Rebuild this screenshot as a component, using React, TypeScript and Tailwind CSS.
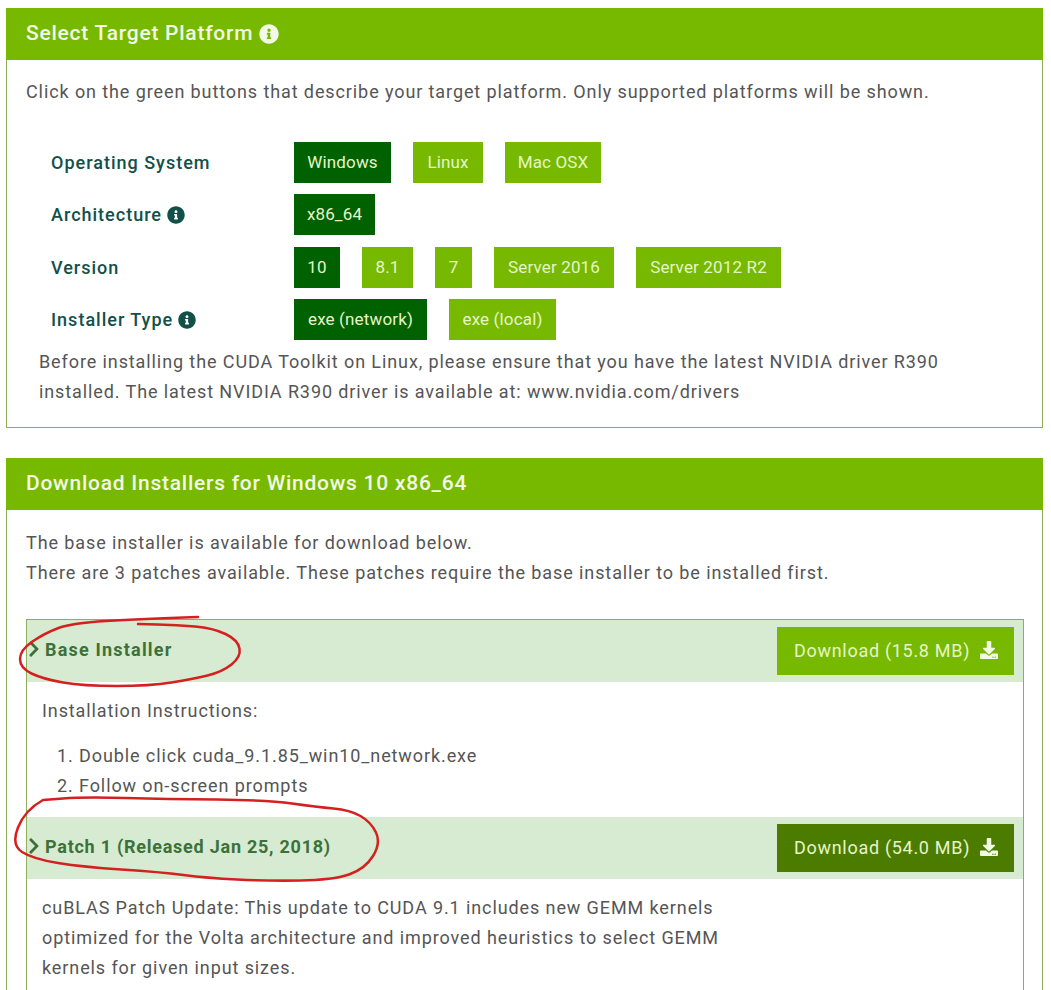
import React from "react";
import { FaChevronRight, FaDownload, FaInfoCircle } from "react-icons/fa";

type Opt = { label: string; width: string; active?: boolean };

const rows: { label: string; info?: boolean; gap: string; options: Opt[] }[] = [
  {
    label: "Operating System",
    gap: "h-[41px] mb-[11px]",
    options: [
      { label: "Windows", width: "w-[97px]", active: true },
      { label: "Linux", width: "w-[70px]" },
      { label: "Mac OSX", width: "w-[96px]" },
    ],
  },
  {
    label: "Architecture",
    info: true,
    gap: "h-[41px] mb-[12px]",
    options: [{ label: "x86_64", width: "w-[81px]", active: true }],
  },
  {
    label: "Version",
    gap: "h-[41px] mb-[11px]",
    options: [
      { label: "10", width: "w-[46px]", active: true },
      { label: "8.1", width: "w-[51px]" },
      { label: "7", width: "w-[37px]" },
      { label: "Server 2016", width: "w-[120px]" },
      { label: "Server 2012 R2", width: "w-[145px]" },
    ],
  },
  {
    label: "Installer Type",
    info: true,
    gap: "h-[41px]",
    options: [
      { label: "exe (network)", width: "w-[133px]", active: true },
      { label: "exe (local)", width: "w-[107px]" },
    ],
  },
];

// midpoints smoothing for the hand drawn red circles
const smooth = (pts: number[][]) => {
  let d = `M${pts[0][0]} ${pts[0][1]}`;
  for (let i = 1; i < pts.length - 1; i++) {
    const mx = (pts[i][0] + pts[i + 1][0]) / 2;
    const my = (pts[i][1] + pts[i + 1][1]) / 2;
    d += ` Q${pts[i][0]} ${pts[i][1]} ${mx} ${my}`;
  }
  const last = pts[pts.length - 1];
  return d + ` L${last[0]} ${last[1]}`;
};

const circleOne = [
  [198, 617], [140, 619], [72, 623], [45, 633], [20, 650], [20, 668], [43, 679], [83, 686],
  [150, 686], [193, 679], [222, 672], [241, 657], [238, 640], [213, 628], [177, 625], [138, 624],
];

const circleTwo = [
  [43, 800], [25, 810], [11, 845], [33, 859], [83, 867], [160, 872], [207, 878], [267, 881],
  [333, 880], [365, 869], [381, 843], [371, 822], [350, 810], [317, 807], [267, 800], [167, 799],
  [83, 797], [43, 800],
];

const AccordionHeader = ({
  title,
  download,
  tracking,
  dark,
}: {
  title: string;
  download: string;
  tracking: string;
  dark?: boolean;
}) => (
  <div className="flex h-[62px] items-center justify-between bg-[#d6ebd1] pr-[9px]">
    <div className={"flex items-center pb-[4px] text-[18px] font-bold text-[#3c7139] " + tracking}>
      <FaChevronRight className="mr-[5px] ml-[1px] h-[18px] w-[12px]" />
      {title}
    </div>
    <div
      className={
        dark
          ? "flex h-[48px] w-[237px] items-center pl-[17px] text-[18px] tracking-[0.7px] text-[#e6f5c8] bg-[#4b7c00]"
          : "flex h-[48px] w-[237px] items-center pl-[17px] text-[18px] tracking-[0.7px] text-[#e6f5c8] bg-[#76b900]"
      }
    >
      <span className="pb-[2px]">{download}</span>
      <FaDownload className="mb-[3px] ml-[10px] h-[18px] w-[18px] text-[#f2f9e6]" />
    </div>
  </div>
);

export default function App() {
  return (
    <div className="relative h-[990px] overflow-hidden bg-white pt-2 pr-2 pl-[6px] font-['Roboto',sans-serif] text-[18px] text-[#555555]">
      <section className="h-[420px] border border-t-0 border-[#8fae5b]">
        <h2 className="-mx-px flex h-[52px] items-center gap-[6px] bg-[#76b900] pl-[20px] text-[21px] font-medium tracking-[0.75px] text-[#f2f9e6]">
          Select Target Platform
          <FaInfoCircle className="h-[20px] w-[20px]" />
        </h2>
        <p className="mt-[20px] pl-[19px] leading-[24px] tracking-[0.9px]">
          Click on the green buttons that describe your target platform. Only supported platforms will be shown.
        </p>
        <div className="mt-[38px] pl-[44px]">
          {rows.map((row) => (
            <div key={row.label} className={`flex items-center ${row.gap}`}>
              <div className="flex w-[243px] items-center gap-[5px] text-[18px] font-medium tracking-[1px] text-[#12504a]">
                {row.label}
                {row.info && <FaInfoCircle className="h-[18px] w-[18px]" />}
              </div>
              <div className="flex gap-[22px]">
                {row.options.map((opt) => (
                  <div
                    key={opt.label}
                    className={
                      opt.active
                        ? "flex h-[41px] items-center justify-center bg-[#006100] text-[17px] tracking-[0.15px] text-[#e6f5c8] " + opt.width
                        : "flex h-[41px] items-center justify-center bg-[#76b900] text-[17px] tracking-[0.15px] text-[#e6f5c8] " + opt.width
                    }
                  >
                    {opt.label}
                  </div>
                ))}
              </div>
            </div>
          ))}
        </div>
        <p className="mt-[7px] pl-[32px] leading-[30px] tracking-[0.9px]">
          Before installing the CUDA Toolkit on Linux, please ensure that you have the latest NVIDIA driver R390
          <br />
          installed. The latest NVIDIA R390 driver is available at: www.nvidia.com/drivers
        </p>
      </section>

      <section className="mt-[30px] h-[600px] border border-t-0 border-[#8fae5b]">
        <h2 className="-mx-px flex h-[52px] items-center bg-[#76b900] pl-[20px] text-[21px] font-medium tracking-[0.75px] text-[#f2f9e6]">
          Download Installers for Windows 10 x86_64
        </h2>
        <p className="mt-[18px] pl-[19px] leading-[30px] tracking-[0.9px]">
          The base installer is available for download below.
          <br />
          There are 3 patches available. These patches require the base installer to be installed first.
        </p>
        <div className="mt-[31px] ml-[19px] h-[400px] w-[998px] border border-b-0 border-[#8fae5b]">
          <AccordionHeader title="Base Installer" download="Download (15.8 MB)" tracking="tracking-[1.2px]" />
          <p className="mt-[14px] pl-[15px] leading-[30px] tracking-[0.9px]">Installation Instructions:</p>
          <ol className="mt-[15px] pl-[30px] leading-[30px] tracking-[0.9px]">
            <li>1. Double click cuda_9.1.85_win10_network.exe</li>
            <li>2. Follow on-screen prompts</li>
          </ol>
          <div className="mt-[16px]">
            <AccordionHeader
              title="Patch 1 (Released Jan 25, 2018)"
              download="Download (54.0 MB)"
              tracking="tracking-[0.75px]"
              dark
            />
          </div>
          <p className="mt-[14px] pl-[15px] leading-[30px] tracking-[0.9px]">
            cuBLAS Patch Update: This update to CUDA 9.1 includes new GEMM kernels
            <br />
            optimized for the Volta architecture and improved heuristics to select GEMM
            <br />
            kernels for given input sizes.
          </p>
        </div>
      </section>

      <svg className="absolute top-0 left-0 h-[990px] w-[1051px]" viewBox="0 0 1051 990" fill="none">
        <path d={smooth(circleOne)} stroke="#d4201f" strokeWidth="2.5" strokeLinecap="round" />
        <path d={smooth(circleTwo)} stroke="#d4201f" strokeWidth="2.5" strokeLinecap="round" />
      </svg>
    </div>
  );
}
